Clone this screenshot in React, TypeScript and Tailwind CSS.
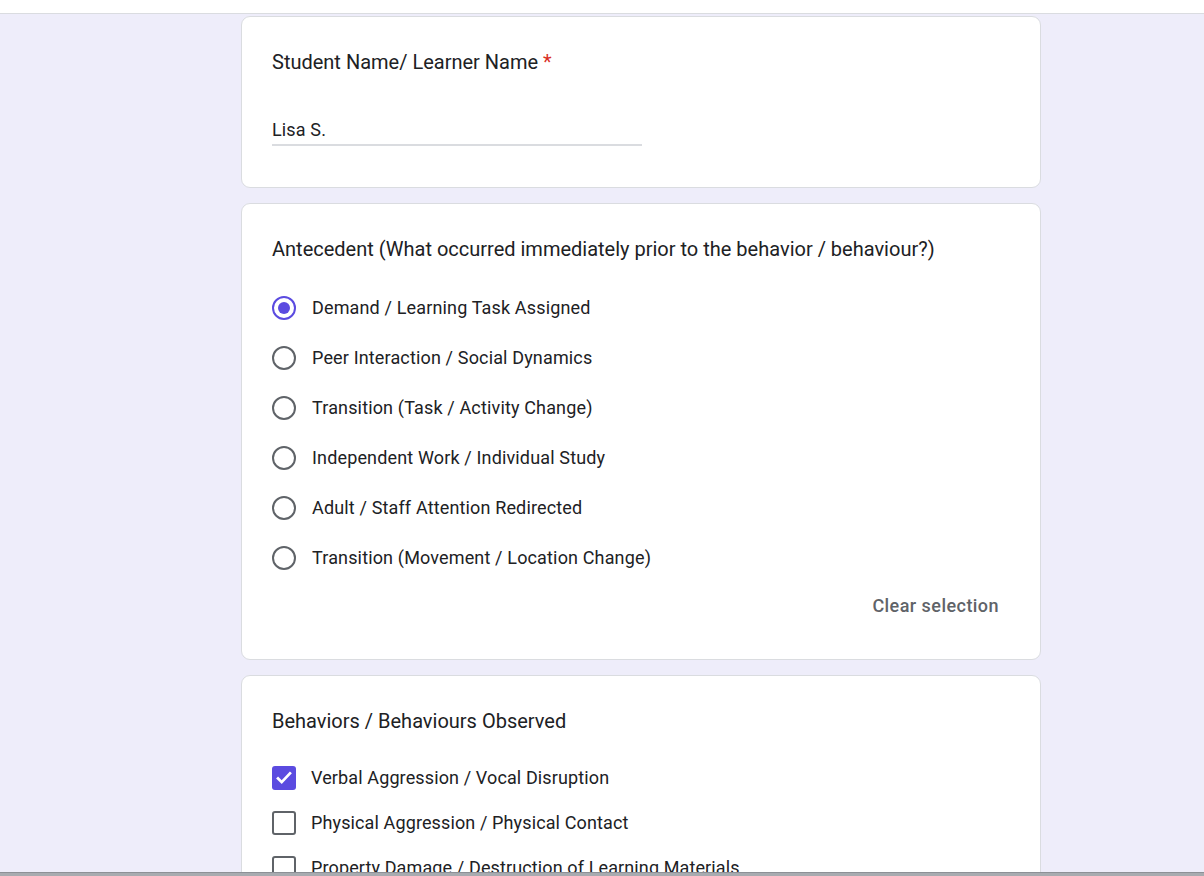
import React from 'react'

const antecedents = [
    'Demand / Learning Task Assigned',
    'Peer Interaction / Social Dynamics',
    'Transition (Task / Activity Change)',
    'Independent Work / Individual Study',
    'Adult / Staff Attention Redirected',
    'Transition (Movement / Location Change)',
]

const behaviors = [
    'Verbal Aggression / Vocal Disruption',
    'Physical Aggression / Physical Contact',
    'Property Damage / Destruction of Learning Materials',
]

function Radio({ checked }: { checked: boolean }) {
    return (
        <div
            className={`w-[24px] h-[24px] rounded-full border-2 flex items-center justify-center shrink-0 ${checked ? 'border-[#5b4be0]' : 'border-[#5f6368]'}`}
        >
            {checked && <div className="w-[12px] h-[12px] rounded-full bg-[#5b4be0]" />}
        </div>
    )
}

function Checkbox({ checked }: { checked: boolean }) {
    if (checked) {
        return (
            <div className="w-[24px] h-[24px] rounded-[3px] bg-[#5b4be0] flex items-center justify-center shrink-0">
                <svg width="22" height="22" viewBox="0 0 24 24" fill="none" stroke="white" strokeWidth="3" strokeLinecap="square">
                    <path d="M5.5 12.5l4 4L18.5 7" />
                </svg>
            </div>
        )
    }
    return <div className="w-[24px] h-[24px] rounded-[3px] border-2 border-[#5f6368] shrink-0" />
}

export default function App() {
    return (
        <div className="h-screen overflow-hidden flex flex-col bg-[#eeedfa] font-['Roboto',sans-serif] text-[#202124]">
            <div className="h-[14px] bg-white border-b border-[#dadce0] shrink-0" />

            <div className="flex-1 pl-[241px] pt-[2px] flex flex-col gap-[15px]">
                {/* Name */}
                <div className="w-[800px] bg-white border border-[#dadce0] rounded-[9px] pl-[30px] pt-[31px] pb-[41px]">
                    <div className="text-[20px] leading-[28px]">
                        Student Name/ Learner Name <span className="text-[#d93025]">*</span>
                    </div>
                    <div className="mt-[40px] w-[370px] border-b-2 border-[#dadce0] text-[18px] leading-[28px] tracking-[0.15px]">
                        Lisa S.
                    </div>
                </div>

                {/* Antecedent */}
                <div className="w-[800px] bg-white border border-[#dadce0] rounded-[9px] pl-[30px] pr-[41px] pt-[31px] pb-[39px]">
                    <div className="text-[20px] leading-[28px]">
                        Antecedent (What occurred immediately prior to the behavior / behaviour?)
                    </div>
                    <div className="mt-[31px] flex flex-col gap-[22px]">
                        {antecedents.map((a, i) => (
                            <div key={a} className="flex items-center gap-[16px] h-[28px]">
                                <Radio checked={i === 0} />
                                <span className="text-[18px] leading-[28px] tracking-[0.15px]">{a}</span>
                            </div>
                        ))}
                    </div>
                    <div className="mt-[20px] flex justify-end">
                        <span className="text-[18px] leading-[28px] font-medium text-[#5f6368] tracking-[0.45px]">Clear selection</span>
                    </div>
                </div>

                {/* Behaviors */}
                <div className="w-[800px] bg-white border border-[#dadce0] rounded-[9px] pl-[30px] pt-[31px] pb-[40px]">
                    <div className="text-[20px] leading-[28px]">Behaviors / Behaviours Observed</div>
                    <div className="mt-[29px] flex flex-col gap-[17px]">
                        {behaviors.map((b, i) => (
                            <div key={b} className="flex items-center gap-[15px] h-[28px]">
                                <Checkbox checked={i === 0} />
                                <span className="text-[18px] leading-[28px] tracking-[0.12px]">{b}</span>
                            </div>
                        ))}
                    </div>
                </div>
            </div>

            <div className="absolute left-0 right-0 bottom-0 h-[4px] bg-[#a8abb0] border-t border-[#8d9096]" />
        </div>
    )
}
